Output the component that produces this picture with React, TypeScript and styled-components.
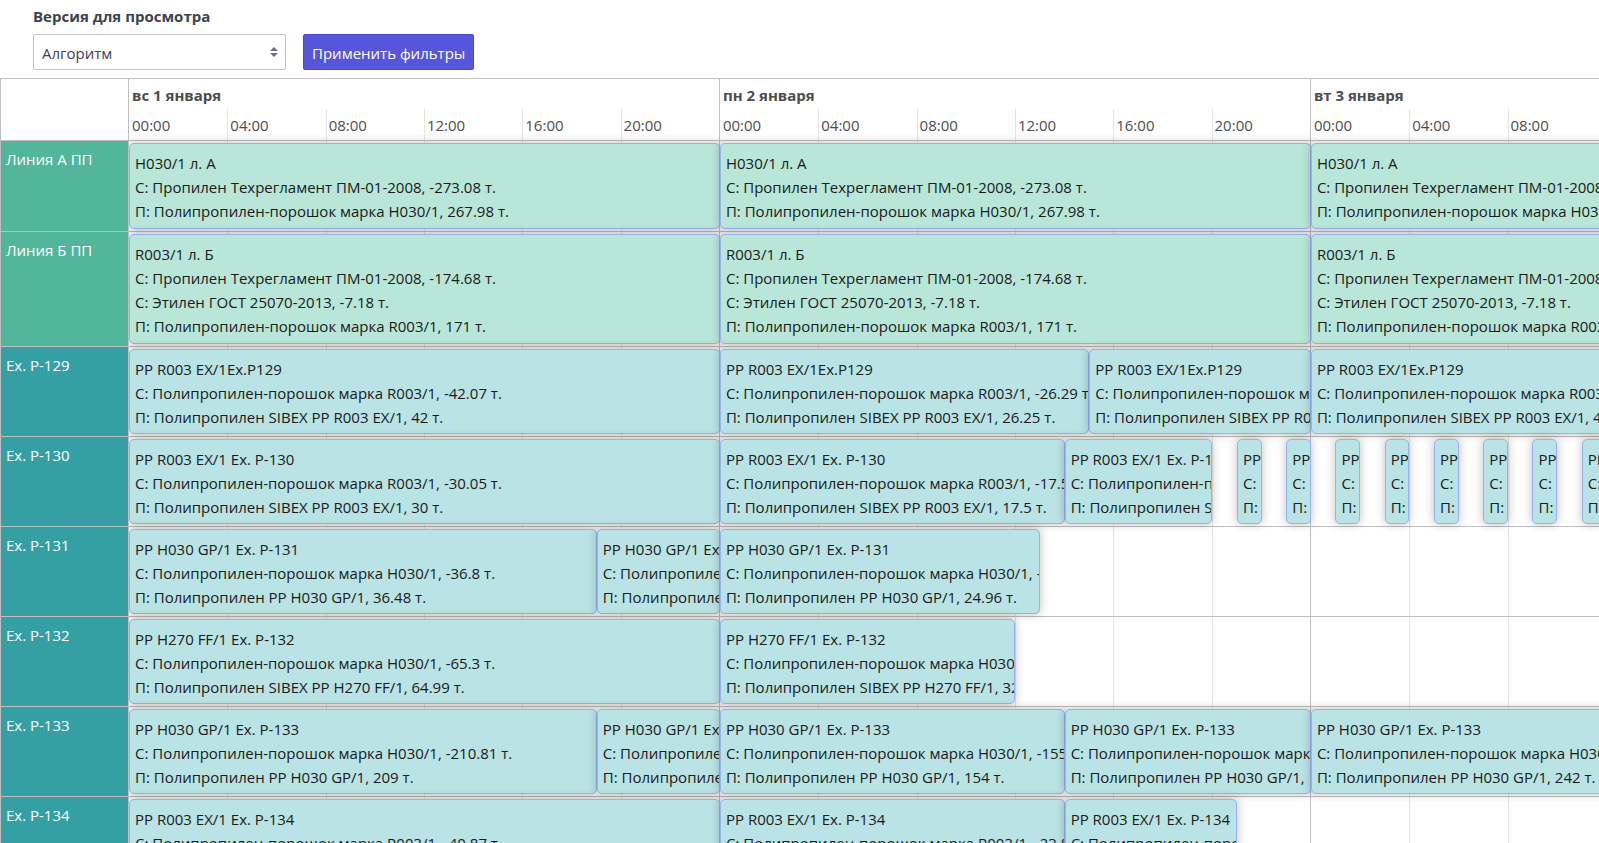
import React from "react";
import styled, { createGlobalStyle } from "styled-components";

const GlobalStyle = createGlobalStyle`
  *, *::before, *::after { box-sizing: border-box; }
  html { height: 100%; }
  body {
    margin: 0;
    height: 100%;
    overflow: hidden;
    background: #fff;
    color: #3b4351;
    font-family: "Open Sans", "Noto Sans", sans-serif;
    font-size: 15px;
    line-height: 24px;
  }
  #root { height: 100%; }
`;

const Page = styled.div`
  display: flex;
  flex-direction: column;
  height: 100%;
`;

const Filters = styled.form`
  display: flex;
  align-items: flex-end;
  gap: 17px;
  padding: 4px 33px 8px;
`;

const Field = styled.div`
  display: flex;
  flex-direction: column;
  gap: 6px;
  width: 253px;
`;

const FieldLabel = styled.label`
  font-weight: 700;
`;

const SelectWrap = styled.div`
  position: relative;
`;

const Select = styled.select`
  appearance: none;
  display: block;
  width: 100%;
  height: 36px;
  padding: 2px 24px 0 8px;
  border: 1px solid #bcc3ce;
  border-radius: 2px;
  background: #fff;
  color: inherit;
  font: inherit;
`;

const SelectArrows = styled.svg`
  position: absolute;
  top: 13px;
  right: 8px;
  width: 8px;
  height: 10px;
  fill: #667189;
  pointer-events: none;
`;

const ApplyButton = styled.button`
  height: 36px;
  padding: 2px 8px 0;
  border: 1px solid #4b48d6;
  border-radius: 2px;
  background: #5755d9;
  color: #fff;
  font: inherit;
  white-space: nowrap;
`;

const Timeline = styled.main`
  display: grid;
  grid-template-columns: 129px minmax(0, 1fr);
  grid-template-rows: minmax(0, 1fr);
  flex: 1;
  min-height: 0;
  overflow: hidden;
  border-top: 1px solid #bfbfbf;
`;

const Groups = styled.div`
  border-left: 1px solid #bfbfbf;
  border-right: 1px solid #bfbfbf;
  overflow: hidden;
`;

const Corner = styled.div`
  height: 62px;
  border-bottom: 1px solid #bfbfbf;
`;

type Kind = "line" | "extruder";

const groupColor = { line: "#52b69a", extruder: "#34a0a4" };
const taskColor = { line: "#b8e6d8", extruder: "#b9e3e4" };
const rowPadding = { line: 19, extruder: 18 };

const rowHeight = (kind: Kind, lines: number) => rowPadding[kind] + lines * 24;

const GroupLabel = styled.div<{ $kind: Kind; $lines: number }>`
  height: ${(p) => rowHeight(p.$kind, p.$lines)}px;
  padding: 6px 5px;
  border-bottom: 1px solid #bfbfbf;
  background: ${(p) => groupColor[p.$kind]};
  color: #fff;
`;

const Viewport = styled.div`
  overflow: hidden;
`;

const Canvas = styled.div`
  display: grid;
  width: 120.6%;
  height: 100%;
`;

const Axis = styled.div`
  grid-area: 1 / 1;
  display: grid;
  grid-template-columns: repeat(3, minmax(0, 1fr));
  color: #4d4d4d;
`;

const Day = styled.section`
  display: flex;
  flex-direction: column;
  border-right: 1px solid #bfbfbf;
`;

const DayName = styled.div`
  height: 30px;
  padding: 4px 3px 0;
  font-weight: 700;
`;

const Slots = styled.div`
  display: grid;
  grid-template-columns: repeat(6, minmax(0, 1fr));
  flex: 1;
`;

const Slot = styled.div`
  padding: 4px 2px 0;
  border-left: 1px solid #e5e5e5;

  &:first-child { border-left-color: transparent; }
`;

const Lanes = styled.div`
  grid-area: 1 / 1;
  margin-top: 61px;
  border-top: 1px solid #bfbfbf;
`;

const Lane = styled.div<{ $kind: Kind; $lines: number }>`
  display: grid;
  grid-template-columns: repeat(72, minmax(0, 1fr));
  height: ${(p) => rowHeight(p.$kind, p.$lines)}px;
  padding: 2px 0;
  border-bottom: 1px solid #bfbfbf;
`;

const Task = styled.article<{ $kind: Kind; $from: number; $to: number }>`
  position: relative;
  grid-row: 1;
  grid-column: ${(p) => p.$from + 1} / ${(p) => p.$to + 1};
  overflow: hidden;
  padding: 7px 5px 3px;
  border: 1px solid #97b0f8;
  border-radius: 5px;
  background: ${(p) => taskColor[p.$kind]};
  box-shadow: 0 0 10px rgba(60, 45, 45, 0.32);
  color: #1a1a1a;
  white-space: nowrap;
`;

const TaskLine = styled.div``;

type TaskData = { from: number; to: number; lines: string[] };
type GroupData = { name: string; kind: Kind; lines: number; tasks: TaskData[] };

const lineA = ["H030/1 л. А", "С: Пропилен Техрегламент ПМ-01-2008, -273.08 т.", "П: Полипропилен-порошок марка H030/1, 267.98 т."];
const lineB = [
  "R003/1 л. Б",
  "С: Пропилен Техрегламент ПМ-01-2008, -174.68 т.",
  "С: Этилен ГОСТ 25070-2013, -7.18 т.",
  "П: Полипропилен-порошок марка R003/1, 171 т.",
];

const task = (from: number, to: number, title: string, used: string, made: string): TaskData => ({
  from,
  to,
  lines: [title, `С: Полипропилен-порошок марка ${used} т.`, `П: Полипропилен ${made} т.`],
});

const days = ["вс 1 января", "пн 2 января", "вт 3 января"];
const hours = ["00:00", "04:00", "08:00", "12:00", "16:00", "20:00"];

const ex129 = "PP R003 EX/1Ex.P129";
const ex130 = "PP R003 EX/1 Ex. P-130";
const ex131 = "PP H030 GP/1 Ex. P-131";
const ex132 = "PP H270 FF/1 Ex. P-132";
const ex133 = "PP H030 GP/1 Ex. P-133";
const ex134 = "PP R003 EX/1 Ex. P-134";

const groups: GroupData[] = [
  { name: "Линия А ПП", kind: "line", lines: 3, tasks: [0, 24, 48].map((from) => ({ from, to: from + 24, lines: lineA })) },
  { name: "Линия Б ПП", kind: "line", lines: 4, tasks: [0, 24, 48].map((from) => ({ from, to: from + 24, lines: lineB })) },
  {
    name: "Ex. P-129",
    kind: "extruder",
    lines: 3,
    tasks: [
      task(0, 24, ex129, "R003/1, -42.07", "SIBEX PP R003 EX/1, 42"),
      task(24, 39, ex129, "R003/1, -26.29", "SIBEX PP R003 EX/1, 26.25"),
      task(39, 48, ex129, "R003/1, -15.78", "SIBEX PP R003 EX/1, 15.75"),
      task(48, 72, ex129, "R003/1, -42.07", "SIBEX PP R003 EX/1, 42"),
    ],
  },
  {
    name: "Ex. P-130",
    kind: "extruder",
    lines: 3,
    tasks: [
      task(0, 24, ex130, "R003/1, -30.05", "SIBEX PP R003 EX/1, 30"),
      task(24, 38, ex130, "R003/1, -17.53", "SIBEX PP R003 EX/1, 17.5"),
      task(38, 44, ex130, "R003/1, -7.51", "SIBEX PP R003 EX/1, 7.5"),
      ...[45, 47, 49, 51, 53, 55, 57, 59].map((from) =>
        task(from, from + 1, ex130, "R003/1, -1.25", "SIBEX PP R003 EX/1, 1.25"),
      ),
    ],
  },
  {
    name: "Ex. P-131",
    kind: "extruder",
    lines: 3,
    tasks: [
      task(0, 19, ex131, "H030/1, -36.8", "PP H030 GP/1, 36.48"),
      task(19, 24, ex131, "H030/1, -9.68", "PP H030 GP/1, 9.6"),
      task(24, 37, ex131, "H030/1, -25.18", "PP H030 GP/1, 24.96"),
    ],
  },
  {
    name: "Ex. P-132",
    kind: "extruder",
    lines: 3,
    tasks: [
      task(0, 24, ex132, "H030/1, -65.3", "SIBEX PP H270 FF/1, 64.99"),
      task(24, 36, ex132, "H030/1, -32.65", "SIBEX PP H270 FF/1, 32.5"),
    ],
  },
  {
    name: "Ex. P-133",
    kind: "extruder",
    lines: 3,
    tasks: [
      task(0, 19, ex133, "H030/1, -210.81", "PP H030 GP/1, 209"),
      task(19, 24, ex133, "H030/1, -55.48", "PP H030 GP/1, 55"),
      task(24, 38, ex133, "H030/1, -155.34", "PP H030 GP/1, 154"),
      task(38, 48, ex133, "H030/1, -110.95", "PP H030 GP/1, 110"),
      task(48, 72, ex133, "H030/1, -244.1", "PP H030 GP/1, 242"),
    ],
  },
  {
    name: "Ex. P-134",
    kind: "extruder",
    lines: 3,
    tasks: [
      task(0, 24, ex134, "R003/1, -40.87", "SIBEX PP R003 EX/1, 40.8"),
      task(24, 38, ex134, "R003/1, -23.84", "SIBEX PP R003 EX/1, 23.8"),
      task(38, 45, ex134, "R003/1, -11.92", "SIBEX PP R003 EX/1, 11.9"),
    ],
  },
];

export default function App() {
  return (
    <Page>
      <GlobalStyle />
      <Filters onSubmit={(e) => e.preventDefault()}>
        <Field>
          <FieldLabel htmlFor="version">Версия для просмотра</FieldLabel>
          <SelectWrap>
            <Select id="version" defaultValue="algorithm">
              <option value="algorithm">Алгоритм</option>
            </Select>
            <SelectArrows viewBox="0 0 8 10" aria-hidden="true">
              <path d="M4 0 8 4H0ZM4 10 0 6H8Z" />
            </SelectArrows>
          </SelectWrap>
        </Field>
        <ApplyButton type="submit">Применить фильтры</ApplyButton>
      </Filters>
      <Timeline>
        <Groups>
          <Corner />
          {groups.map((g) => (
            <GroupLabel key={g.name} $kind={g.kind} $lines={g.lines}>
              {g.name}
            </GroupLabel>
          ))}
        </Groups>
        <Viewport>
          <Canvas>
            <Axis>
              {days.map((day) => (
                <Day key={day}>
                  <DayName>{day}</DayName>
                  <Slots>
                    {hours.map((hour) => (
                      <Slot key={hour}>{hour}</Slot>
                    ))}
                  </Slots>
                </Day>
              ))}
            </Axis>
            <Lanes>
              {groups.map((g) => (
                <Lane key={g.name} $kind={g.kind} $lines={g.lines}>
                  {g.tasks.map((t) => (
                    <Task key={t.from} $kind={g.kind} $from={t.from} $to={t.to}>
                      {t.lines.map((line) => (
                        <TaskLine key={line}>{line}</TaskLine>
                      ))}
                    </Task>
                  ))}
                </Lane>
              ))}
            </Lanes>
          </Canvas>
        </Viewport>
      </Timeline>
    </Page>
  );
}
